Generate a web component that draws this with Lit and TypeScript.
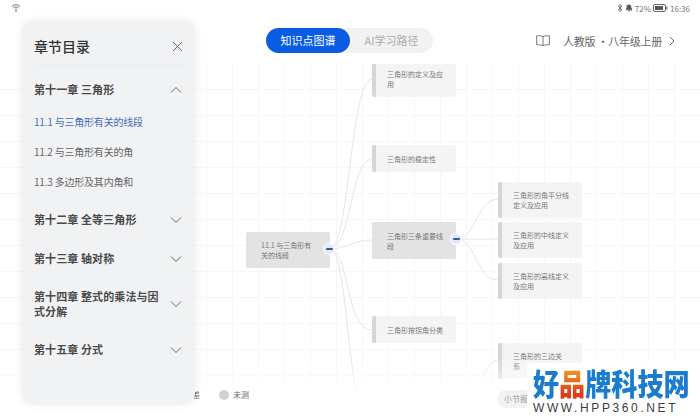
import { LitElement, html, css, svg } from "lit";
import { customElement } from "lit/decorators.js";

const chev = (up: boolean) => html`<svg class="chev" width="12" height="8" viewBox="0 0 12 8"><path d="${up ? "M1 6.5 6 1.5l5 5" : "M1 1.5l5 5 5-5"}" fill="none" stroke="#666" stroke-width="1"/></svg>`;

type N = { t: string; x: number; y: number; h: number; strong?: boolean; bar?: boolean };
const nodes: N[] = [
  { t: "三角形的定义及应\n用", x: 372, y: 61, h: 36, bar: true },
  { t: "三角形的稳定性", x: 372, y: 145, h: 27, bar: true },
  { t: "三角形三条重要线\n段", x: 372, y: 222, h: 37, strong: true },
  { t: "三角形按拐角分类", x: 372, y: 316, h: 27, bar: true },
  { t: "11.1 与三角形有\n关的线段", x: 246, y: 232, h: 36, strong: true },
  { t: "三角形的角平分线\n定义及应用", x: 498, y: 182, h: 36, bar: true },
  { t: "三角形的中线定义\n及应用", x: 498, y: 222, h: 36, bar: true },
  { t: "三角形的高线定义\n及应用", x: 498, y: 263, h: 36, bar: true },
  { t: "三角形的三边关\n系", x: 498, y: 343, h: 36, bar: true },
];

const links = [
  "M329 249C350 249 350 80 372 79",
  "M329 249C352 249 350 159 372 159",
  "M329 249C350 249 350 240 372 240",
  "M329 249C350 249 345 330 372 330",
  "M329 249C345 249 345 340 358 400",
  "M456 239C476 239 476 200 498 199",
  "M456 239H498",
  "M456 239C476 239 476 280 498 280",
  "M482 378C487 368 490 361 498 360",
];

@customElement("app-root")
export class AppRoot extends LitElement {
  static styles = css`
    :host { display: block; position: relative; width: 700px; height: 420px; overflow: hidden; background: #fff;
      font-family: "Noto Sans CJK SC", "Noto Sans", sans-serif; }
    .status { height: 16px; display: flex; align-items: center; justify-content: space-between; padding: 0 10px 0 11px; color: #777; font-size: 8px; }
    .status-r { display: flex; align-items: center; gap: 2px; }
    .top { height: 25px; margin-top: 12px; display: flex; align-items: center; position: relative; }
    .tabs { margin-left: 266px; width: 167px; height: 25px; border-radius: 13px; background: #f2f2f3; display: flex; font-size: 11px; color: #a9a9a9; }
    .tab { width: 84px; text-align: center; line-height: 25px; border-radius: 13px; }
    .tab.on { background: #0a5ce2; color: #fff; }
    .tab.off { width: 83px; }
    .book { margin-left: 103px; display: flex; align-items: center; color: #666; font-size: 11px; }
    .book span { margin: 0 7px 0 13px; letter-spacing: -.25px; }
    .canvas { position: absolute; left: 0; right: 0; top: 64px; bottom: 0; overflow: hidden;
      background-image: linear-gradient(#f4f7fa 1px, transparent 1px), linear-gradient(90deg, #f4f7fa 1px, transparent 1px);
      background-size: 26px 26px; background-position: 0 -1px, 24px 0; }
    .links { position: absolute; left: 0; top: -64px; }
    .node { position: absolute; box-sizing: border-box; width: 84px; display: flex; align-items: center; padding: 0 10px 0 15px;
      background: #f4f4f4; border-radius: 2px; font-size: 7px; line-height: 10px; color: #777; white-space: pre-line; }
    .node.bar { border-left: 4px solid #d6d6d6; padding-left: 11px; }
    .node.strong { background: #e3e3e3; }
    .dot { position: absolute; width: 10px; height: 10px; border-radius: 50%; background: #e1e9f9; box-shadow: 0 0 0 1px #fff; display: flex; align-items: center; justify-content: center; }
    .dot i { width: 7px; height: 2px; border-radius: 1px; background: #3a5a96; }
    .fade { position: absolute; left: 0; right: 0; bottom: 0; height: 62px; background: linear-gradient(rgba(255,255,255,0), #fff 70%); }
    .legend { position: absolute; left: 192px; top: 390px; display: flex; align-items: center; font-size: 8px; color: #666; line-height: 10px; }
    .legend b { width: 10px; height: 10px; border-radius: 50%; background: #d2d2d2; margin: 0 4px 0 19px; }
    .legend span { font-weight: 400; }
    .report { position: absolute; left: 497px; top: 390px; width: 70px; height: 18px; padding-left: 7px; box-sizing: border-box; border-radius: 9px; background: #f2f2f2; font-size: 8px; line-height: 18px; color: #999; }
    .side { position: absolute; left: 22px; top: 21px; width: 173px; height: 383px; box-sizing: border-box; padding: 0 12px; border-radius: 10px; background: #f1f2f4;
      box-shadow: 0 0 10px rgba(0,0,0,.08); color: #444; }
    .side-h { height: 45px; box-sizing: border-box; padding-top: 6px; display: flex; align-items: center; justify-content: space-between; border-bottom: 1px solid #ebecee; font-size: 14px; color: #333; font-weight: 500; }
    .ch { display: flex; align-items: center; justify-content: space-between; gap: 8px; font-size: 11px; line-height: 15px; font-weight: 700; color: #4a4a4a; letter-spacing: .1px; }
    .ch > div { flex: 1; }
    .ch.first { margin-top: 16px; }
    .ch.next { margin-top: 24px; }
    .ch.tight { margin-top: 23px; }
    .chev { flex: none; margin-right: 1px; }
    .sub { font-size: 10px; line-height: 14px; color: #666; margin-top: 16px; letter-spacing: -.2px; }
    .sub.on { color: #3f6eb6; margin-top: 18px; }
    .mark { position: absolute; left: 527px; top: 363px; width: 173px; height: 57px; background: #fff; box-sizing: border-box; padding-left: 6px; }
    .mark .a { font-family: "Noto Sans CJK SC", sans-serif; font-weight: 900; font-size: 30px; line-height: 38px; color: #1a7bcf; white-space: nowrap; transform: scaleX(.87); transform-origin: left center; }
    .mark em { font-style: normal; background: linear-gradient(#f08c1e 30%, #e03c1a 75%); -webkit-background-clip: text; background-clip: text; color: transparent; }
    .mark .b { font-family: "Liberation Sans", sans-serif; font-size: 12px; line-height: 13px; margin-top: 1px; color: #3c3c3c; letter-spacing: 2.6px; white-space: nowrap; }
  `;

  render() {
    return html`
      <div class="canvas">
        <svg class="links" width="700" height="420">
          ${links.map((d) => svg`<path d="${d}" fill="none" stroke="#e6e6e6" stroke-width="1"/>`)}
        </svg>
        ${nodes.map((n) => html`<div class="node ${n.bar ? "bar" : ""} ${n.strong ? "strong" : ""}" style="left:${n.x}px;top:${n.y - 64}px;height:${n.h}px">${n.t}</div>`)}
        <div class="dot" style="left:324px;top:180px"><i></i></div>
        <div class="dot" style="left:451px;top:170px"><i></i></div>
        <div class="fade"></div>
      </div>

      <div class="status">
        <svg width="10" height="8" viewBox="0 0 10 8"><path d="M.8 2.4C3.3.2 6.7.2 9.2 2.4M2.3 4C4 2.6 6 2.6 7.7 4M3.8 5.6c.8-.6 1.6-.6 2.4 0" fill="none" stroke="#666" stroke-width=".9"/><circle cx="5" cy="7" r=".8" fill="#666"/></svg>
        <div class="status-r">
          <svg width="6" height="8" viewBox="0 0 6 8"><path d="M1 2l4 3.6L3 7.4V.6L5 2.4 1 6" fill="none" stroke="#555" stroke-width=".8"/></svg>
          <svg width="8" height="8" viewBox="0 0 8 8"><path d="M4 .8C2.6.8 2 2 2 3.4L1 5.6h6L6 3.4C6 2 5.4.8 4 .8zM3.2 6.4h1.6L4 7.4zM1 1l6 6" fill="#555" stroke="#555" stroke-width=".6"/></svg>
          <span>72%</span>
          <svg width="15" height="8" viewBox="0 0 15 8"><rect x=".5" y=".5" width="12" height="7" rx="1.5" fill="none" stroke="#666"/><rect x="2" y="2" width="8" height="4" fill="#555"/><rect x="13.2" y="2.6" width="1.2" height="2.8" fill="#666"/></svg>
          <span>16:36</span>
        </div>
      </div>

      <div class="top">
        <div class="tabs"><div class="tab on">知识点图谱</div><div class="tab off">AI学习路径</div></div>
        <div class="book">
          <svg width="14" height="11" viewBox="0 0 14 11"><path d="M7 1.6C5.6.8 3 .6.7.8v9c2.3-.2 4.9 0 6.3.8 1.4-.8 4-1 6.3-.8v-9C11 .6 8.4.8 7 1.6zM7 1.6v9" fill="none" stroke="#666" stroke-width=".9"/></svg>
          <span>人教版 ·八年级上册</span>
          <svg width="6" height="10" viewBox="0 0 6 10"><path d="M1 1l4 4-4 4" fill="none" stroke="#666" stroke-width="1"/></svg>
        </div>
      </div>

      <div class="legend">差<b></b><span>未测</span></div>
      <div class="report">小节报告</div>

      <aside class="side">
        <div class="side-h">章节目录
          <svg width="11" height="11" viewBox="0 0 11 11"><path d="M1 1l9 9M10 1l-9 9" stroke="#666" stroke-width="1"/></svg>
        </div>
        <div class="ch first"><div>第十一章 三角形</div>${chev(true)}</div>
        <div class="sub on">11.1 与三角形有关的线段</div>
        <div class="sub">11.2 与三角形有关的角</div>
        <div class="sub">11.3 多边形及其内角和</div>
        <div class="ch tight"><div>第十二章 全等三角形</div>${chev(false)}</div>
        <div class="ch next"><div>第十三章 轴对称</div>${chev(false)}</div>
        <div class="ch tight"><div>第十四章 整式的乘法与因式分解</div>${chev(false)}</div>
        <div class="ch tight"><div>第十五章 分式</div>${chev(false)}</div>
      </aside>

      <div class="mark">
        <div class="a">好<em>品</em>牌科技网</div>
        <div class="b">WWW.HPP360.NET</div>
      </div>
    `;
  }
}
